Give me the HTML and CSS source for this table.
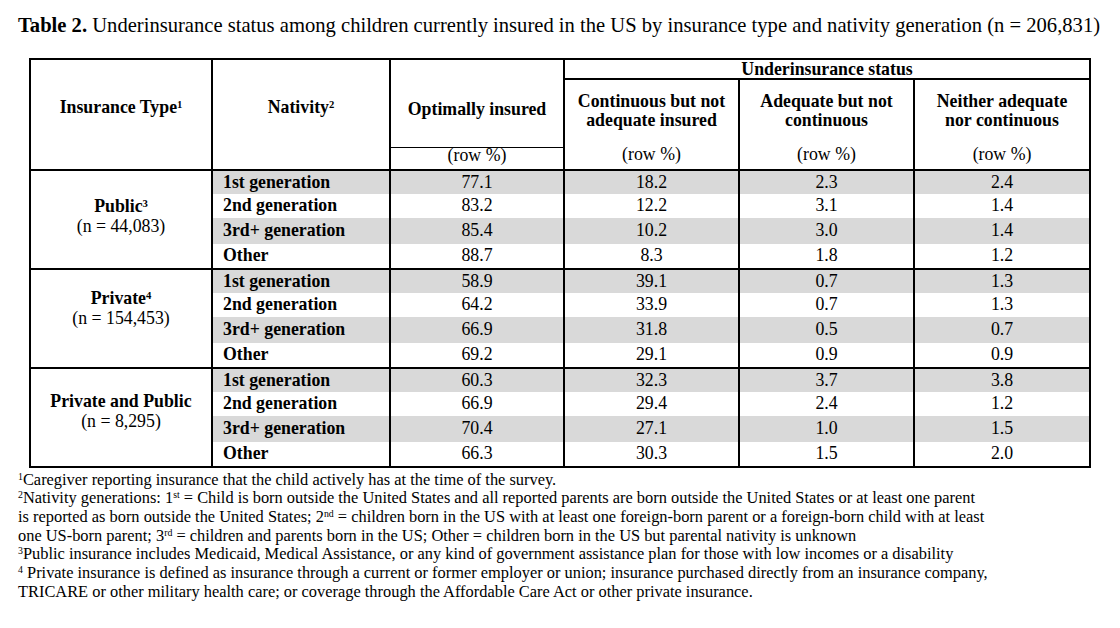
FILE: index.html
```html
<!DOCTYPE html>
<html>
<head>
<meta charset="utf-8">
<link rel="stylesheet" href="styles.css">
</head>
<body>
<div class="page">
  <h1 class="title"><b>Table 2.</b> Underinsurance status among children currently insured in the US by insurance type and nativity generation (n = 206,831)</h1>
  <table class="tbl">
    <colgroup>
      <col class="c1"><col class="c2"><col class="c3"><col class="c4"><col class="c5"><col class="c6">
    </colgroup>
    <thead>
      <tr class="h-a">
        <th rowspan="3" class="type-h">Insurance Type<sup>1</sup></th>
        <th rowspan="3" class="nat-h">Nativity<sup>2</sup></th>
        <th rowspan="2" class="opt-h">Optimally insured</th>
        <th colspan="3" class="under-h">Underinsurance status</th>
      </tr>
      <tr class="h-b">
        <th class="sub-h">Continuous but not<br>adequate insured</th>
        <th class="sub-h">Adequate but not<br>continuous</th>
        <th class="sub-h">Neither adequate<br>nor continuous</th>
      </tr>
      <tr class="h-c">
        <td class="pct opt-pct">(row %)</td>
        <td class="pct">(row %)</td>
        <td class="pct">(row %)</td>
        <td class="pct">(row %)</td>
      </tr>
    </thead>
    <tbody class="grp">
      <tr class="r1 shade"><td rowspan="4" class="type">Public<sup>3</sup><br><span class="n">(n = 44,083)</span></td><td class="nat">1st generation</td><td>77.1</td><td>18.2</td><td>2.3</td><td>2.4</td></tr>
      <tr class="r2"><td class="nat">2nd generation</td><td>83.2</td><td>12.2</td><td>3.1</td><td>1.4</td></tr>
      <tr class="r3 shade"><td class="nat">3rd+ generation</td><td>85.4</td><td>10.2</td><td>3.0</td><td>1.4</td></tr>
      <tr class="r4"><td class="nat">Other</td><td>88.7</td><td>8.3</td><td>1.8</td><td>1.2</td></tr>
    </tbody>
    <tbody class="grp">
      <tr class="r1 shade"><td rowspan="4" class="type type-up">Private<sup>4</sup><br><span class="n">(n = 154,453)</span></td><td class="nat">1st generation</td><td>58.9</td><td>39.1</td><td>0.7</td><td>1.3</td></tr>
      <tr class="r2"><td class="nat">2nd generation</td><td>64.2</td><td>33.9</td><td>0.7</td><td>1.3</td></tr>
      <tr class="r3 shade"><td class="nat">3rd+ generation</td><td>66.9</td><td>31.8</td><td>0.5</td><td>0.7</td></tr>
      <tr class="r4"><td class="nat">Other</td><td>69.2</td><td>29.1</td><td>0.9</td><td>0.9</td></tr>
    </tbody>
    <tbody class="grp">
      <tr class="r1 shade"><td rowspan="4" class="type type-up-sm">Private and Public<br><span class="n">(n = 8,295)</span></td><td class="nat">1st generation</td><td>60.3</td><td>32.3</td><td>3.7</td><td>3.8</td></tr>
      <tr class="r2"><td class="nat">2nd generation</td><td>66.9</td><td>29.4</td><td>2.4</td><td>1.2</td></tr>
      <tr class="r3 shade"><td class="nat">3rd+ generation</td><td>70.4</td><td>27.1</td><td>1.0</td><td>1.5</td></tr>
      <tr class="r4"><td class="nat">Other</td><td>66.3</td><td>30.3</td><td>1.5</td><td>2.0</td></tr>
    </tbody>
  </table>
  <div class="notes">
    <p><sup>1</sup>Caregiver reporting insurance that the child actively has at the time of the survey.</p>
    <p><sup>2</sup>Nativity generations: 1<sup>st</sup> = Child is born outside the United States and all reported parents are born outside the United States or at least one parent<br>is reported as born outside the United States; 2<sup>nd</sup> = children born in the US with at least one foreign-born parent or a foreign-born child with at least<br>one US-born parent; 3<sup>rd</sup> = children and parents born in the US; Other = children born in the US but parental nativity is unknown</p>
    <p><sup>3</sup>Public insurance includes Medicaid, Medical Assistance, or any kind of government assistance plan for those with low incomes or a disability</p>
    <p><sup>4</sup> Private insurance is defined as insurance through a current or former employer or union; insurance purchased directly from an insurance company,<br>TRICARE or other military health care; or coverage through the Affordable Care Act or other private insurance.</p>
  </div>
</div>
</body>
</html>
```
FILE: styles.css
```css
html, body {
  margin: 0;
  padding: 0;
  background: #ffffff;
}
body {
  font-family: "Liberation Serif", "Times New Roman", serif;
  color: #000;
  width: 1120px;
  height: 628px;
  overflow: hidden;
}
.page {
  padding: 14px 0 0 18px;
}
.title {
  margin: 0;
  font-size: 20.6px;
  font-weight: normal;
  line-height: 22px;
  white-space: nowrap;
}
.title b {
  font-weight: bold;
}
sup {
  font-size: 0.6em;
  line-height: 0;
  vertical-align: 0.5em;
}
.tbl {
  margin: 22px 0 0 11px;
  border-collapse: collapse;
  table-layout: fixed;
  width: 1060px;
  font-size: 17.8px;
  line-height: 19px;
}
.c1 { width: 182px; }
.c2 { width: 178px; }
.c3 { width: 174px; }
.c4 { width: 175px; }
.c5 { width: 175px; }
.c6 { width: 176px; }
.tbl th, .tbl td {
  padding: 0;
  text-align: center;
  vertical-align: middle;
  border-left: 2px solid #000;
  border-right: 2px solid #000;
  white-space: nowrap;
}
.tbl thead th {
  font-weight: bold;
}
.h-a th {
  border-top: 2px solid #000;
}
.h-a { height: 20px; }
.under-h {
  border-bottom: 2px solid #000;
  height: 18px;
  line-height: 16px;
}
.type-h, .nat-h {
  border-bottom: 2px solid #000;
  padding-bottom: 14px !important;
}
.opt-h {
  border-bottom: 1px solid #000;
  padding-top: 12px !important;
}
.h-b { height: 68px; }
.sub-h {
  vertical-align: middle;
  padding-bottom: 6px !important;
}
.h-c { height: 22px; }
.pct {
  font-weight: normal;
  border-bottom: 2px solid #000;
  vertical-align: middle;
  line-height: 14px;
  height: 14px;
  padding-bottom: 7px !important;
}
.grp {
  border-top: 2px solid #000;
  border-bottom: 2px solid #000;
}
.grp td {
  border-top: 0;
}
.r1 { height: 24px; }
.r2 { height: 24px; }
.r3 { height: 26px; }
.r4 { height: 25px; }
.shade td {
  background: #d9d9d9;
}
.shade td.type {
  background: #fff;
}
.type {
  font-weight: bold;
  line-height: 20px;
  padding-bottom: 6px !important;
}
.type-up {
  padding-bottom: 20px !important;
}
.type-up-sm {
  padding-bottom: 12px !important;
}
.type .n {
  font-weight: normal;
}
.nat {
  text-align: left !important;
  padding-left: 10px !important;
  font-weight: bold;
}
.notes {
  margin-top: 3px;
  font-size: 16.4px;
  line-height: 18.7px;
  white-space: nowrap;
}
.notes p {
  margin: 0;
}
.notes sup {
  font-size: 0.6em;
}
```
